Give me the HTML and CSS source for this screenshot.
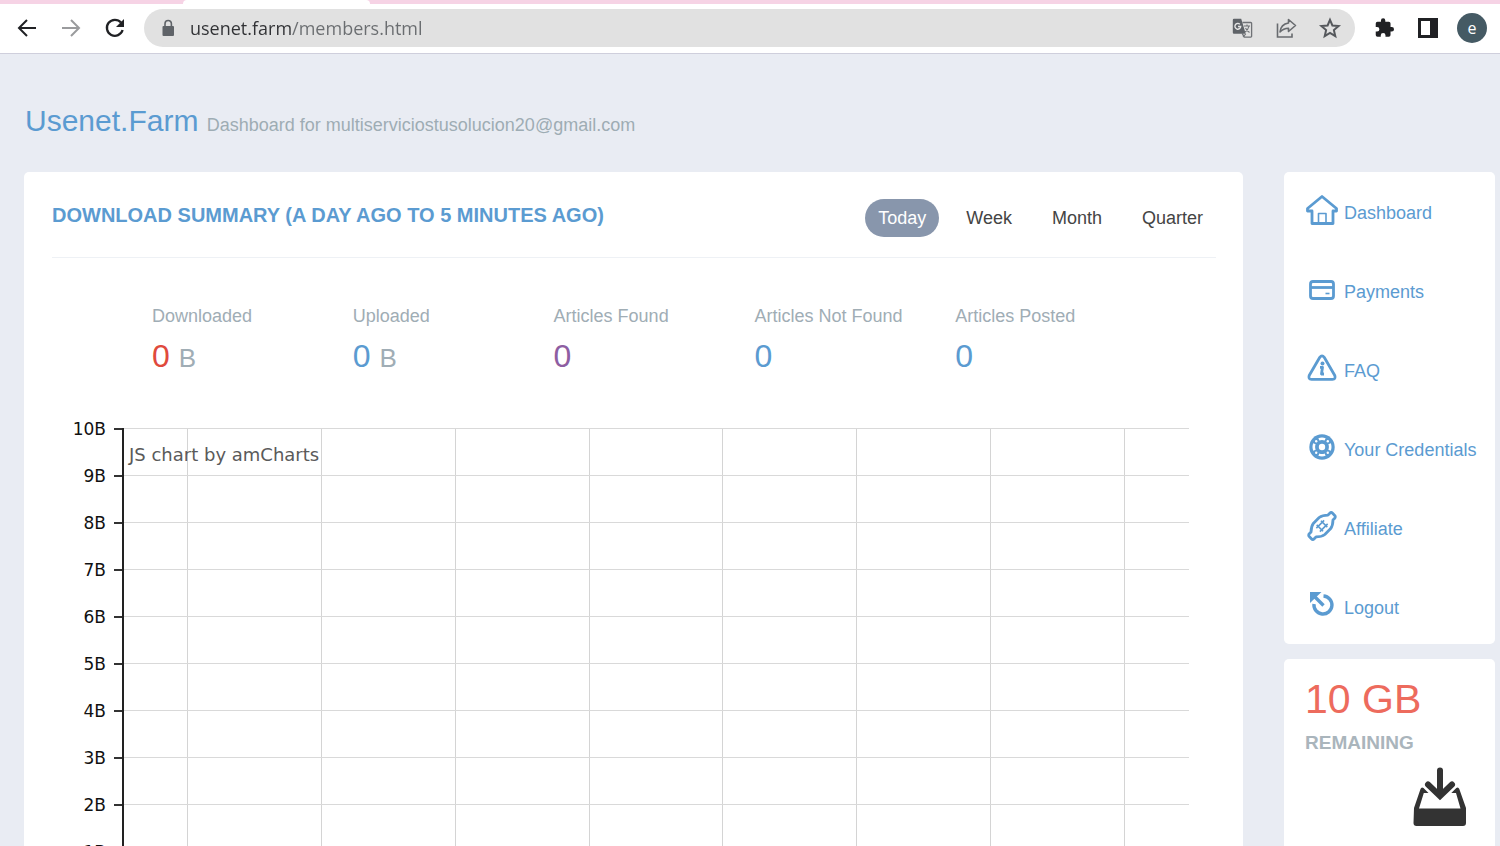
FILE: index.html
```html
<!DOCTYPE html>
<html lang="en">
<head>
<meta charset="utf-8">
<title>Usenet.Farm members</title>
<link rel="stylesheet" href="styles.css">
</head>
<body>
<div class="browser">
  <div class="tab-strip"><div class="tab-active"></div></div>
  <div class="toolbar">
    <button class="tool" aria-label="Back"><svg width="20" height="20" viewBox="0 0 20 20" fill="none" stroke="#202124" stroke-width="2"><path d="M19 10H2.5M10 2L2 10l8 8"/></svg></button>
    <button class="tool" aria-label="Forward"><svg width="20" height="20" viewBox="0 0 20 20" fill="none" stroke="#9a9b9d" stroke-width="2"><path d="M1 10h16.500M10 2l8 8-8 8"/></svg></button>
    <button class="tool" aria-label="Reload"><svg width="20" height="20" viewBox="0 0 20 20" fill="none" stroke="#202124" stroke-width="2.300"><path d="M16 4.600A8 8 0 1 0 17.600 12"/><path d="M19 1v8h-8z" fill="#202124" stroke="none"/></svg></button>
    <div class="omnibox">
      <svg class="omni-icon" viewBox="0 0 24 24"><rect x="6.500" y="10" width="11.500" height="10" rx="1" fill="#5f6368"/><path d="M9 10V7.700a3.200 3.200 0 0 1 6.400 0V10" fill="none" stroke="#5f6368" stroke-width="1.600"/></svg>
      <input class="url" type="text" aria-label="Address" value="usenet.farm/members.html">
      <button class="omni-button" aria-label="Translate"><svg class="omni-icon" viewBox="0 0 24 24"><path d="M12.500 6.500h8.300a.8.8 0 0 1 .8.8v13a.8.8 0 0 1-.8.8h-6.500l-2-3.500" fill="none" stroke="#6f7276" stroke-width="1.300"/><path d="M4 2.800h7.200l4.500 15H4a1.200 1.200 0 0 1-1.200-1.200V4A1.200 1.200 0 0 1 4 2.800z" fill="#5f6368"/><path d="M9.800 8.200A2.900 2.900 0 1 0 10.700 10.500H8" fill="none" stroke="#e6e6e6" stroke-width="1.400"/><path d="M14 10h6M17 8.500V10M19 10c-.6 3-2.500 5-4 6M15.500 12c1 2 2.500 3.500 4 4.500M13 21l2.800-3.200" fill="none" stroke="#6f7276" stroke-width="1.100"/></svg></button>
      <button class="omni-button" aria-label="Share"><svg class="omni-icon" viewBox="0 0 24 24" fill="none" stroke="#686b6f" stroke-width="1.600"><path d="M3.500 7.500v13.500h14.500V17.500"/><path d="M14.500 3.500l7 6-7 6v-3.300c-3.500 0-6 1-8.500 3.800.5-5 3.500-8.200 8.500-9z" stroke-linejoin="round"/></svg></button>
      <button class="omni-button" aria-label="Bookmark"><svg class="omni-icon" viewBox="0 0 24 24"><path d="M12 3.800l2.400 5.700 6.200.5-4.700 4.100 1.400 6.100L12 17l-5.300 3.200 1.400-6.100L3.400 10l6.200-.5z" fill="none" stroke="#55585c" stroke-width="2"/></svg></button>
    </div>
    <button class="tool" aria-label="Extensions"><svg width="24" height="24" viewBox="0 0 24 24"><path d="M20.500 11H19V7a2 2 0 0 0-2-2h-4V3.500a2.500 2.500 0 0 0-5 0V5H4a2 2 0 0 0-2 2v3.800h1.500a2.700 2.700 0 0 1 0 5.400H2V20a2 2 0 0 0 2 2h3.800v-1.500a2.700 2.700 0 0 1 5.400 0V22H17a2 2 0 0 0 2-2v-4h1.500a2.500 2.500 0 0 0 0-5z" fill="#202124" transform="translate(2 1.500) scale(.87)"/></svg></button>
    <button class="tool" aria-label="Side panel"><svg width="20" height="20" viewBox="0 0 20 20"><path d="M0 0h20v20H0zM3 3v14h9V3z" fill="#202124" fill-rule="evenodd"/></svg></button>
    <button class="tool avatar" aria-label="Profile">e</button>
  </div>

  <div class="page">
    <h1 class="page-title">Usenet.Farm <small class="page-subtitle">Dashboard for multiserviciostusolucion20@gmail.com</small></h1>
    <div class="columns">
      <main class="card summary">
        <header class="summary-head">
          <h2 class="summary-title">Download summary (a day ago to 5 minutes ago)</h2>
          <div class="ranges">
            <button class="range range-active" aria-pressed="true">Today</button>
            <button class="range" aria-pressed="false">Week</button>
            <button class="range" aria-pressed="false">Month</button>
            <button class="range" aria-pressed="false">Quarter</button>
          </div>
        </header>
        <dl class="stats">
          <div><dt class="stat-label">Downloaded</dt><dd class="stat-value red">0 <small class="unit">B</small></dd></div>
          <div><dt class="stat-label">Uploaded</dt><dd class="stat-value blue">0 <small class="unit">B</small></dd></div>
          <div><dt class="stat-label">Articles Found</dt><dd class="stat-value purple">0</dd></div>
          <div><dt class="stat-label">Articles Not Found</dt><dd class="stat-value blue">0</dd></div>
          <div><dt class="stat-label">Articles Posted</dt><dd class="stat-value blue">0</dd></div>
        </dl>
        <div class="chart">
          <ul class="axis">
            <li>10B</li><li>9B</li><li>8B</li><li>7B</li><li>6B</li><li>5B</li><li>4B</li><li>3B</li><li>2B</li><li>1B</li>
          </ul>
          <div class="plot">
            <div class="grid-cols"><i></i><i></i><i></i><i></i><i></i><i></i><i></i><i></i></div>
            <div class="grid-rows"><i></i><i></i><i></i><i></i><i></i><i></i><i></i><i></i><i></i><i></i></div>
            <a class="credit" href="#">JS chart by amCharts</a>
          </div>
        </div>
      </main>

      <aside class="side">
        <nav class="card menu">
          <a class="menu-link" href="#"><svg class="menu-icon" viewBox="0 0 32 32"><path d="M16 1.500L1.500 13.500v2.500H6V28.500h21V16h3.500v-2.500z" class="line"/><path d="M12.500 28V18.500h7.500V28" class="thin"/></svg>Dashboard</a>
          <a class="menu-link" href="#"><svg class="menu-icon" viewBox="0 0 32 32"><rect x="4.500" y="7.500" width="23" height="17" rx="2.500" class="line"/><path d="M5 13.500h22" class="line"/><path d="M19.500 19.500h4" class="thin"/></svg>Payments</a>
          <a class="menu-link" href="#"><svg class="menu-icon" viewBox="0 0 32 32"><path d="M13.800 4.300Q16 1.300 18.200 4.300L28.800 22.500Q30 26.300 26.500 26.300H5.500Q2 26.300 3.200 22.500z" class="line"/><circle cx="16.500" cy="10.500" r="2" class="solid"/><path d="M14 14.300h2.500l-1 6.700h2.500" class="line"/></svg>FAQ</a>
          <a class="menu-link" href="#"><svg class="menu-icon" viewBox="0 0 32 32"><circle cx="16" cy="15" r="12.700" class="solid"/><circle cx="16" cy="15" r="8.200" class="cut" pathLength="8" stroke-dasharray="1 1" stroke-dashoffset=".5"/><g fill="#fff"><circle cx="16" cy="15" r="3.200"/><circle cx="10.200" cy="9.200" r="1.200"/><circle cx="21.800" cy="9.200" r="1.200"/><circle cx="10.200" cy="20.800" r="1.200"/><circle cx="21.800" cy="20.800" r="1.200"/></g></svg>Your Credentials</a>
          <a class="menu-link" href="#"><svg class="menu-icon" viewBox="0 0 32 32"><g transform="translate(16 15) rotate(-45)"><path d="M-12-3.500Q-8-7.500-4-8H4Q8-7.500 12-3.500H14.500a2 2 0 0 1 2 2v3a2 2 0 0 1-2 2H12Q8 7.500 4 8H-4Q-8 7.500-12 3.500H-14.500a2 2 0 0 1-2-2v-3a2 2 0 0 1 2-2z" class="line"/><path d="M-5.500-2.500H5.500M-5.500 2.500H5.500M-3-4.500v9M3-4.500v9" class="thin"/></g></svg>Affiliate</a>
          <a class="menu-link" href="#"><svg class="menu-icon" viewBox="0 0 32 32"><path d="M8 14a9 9 0 1 0 9.500-8" class="bold"/><path d="M17.500 15.500L8 6" class="bold"/><path d="M4 2h11.500L4 13z" class="solid"/></svg>Logout</a>
        </nav>
        <section class="card quota">
          <p class="quota-value">10 GB</p>
          <p class="quota-label">Remaining</p>
          <svg class="quota-icon" width="54" height="60" viewBox="0 0 54 60"><path d="M1 41l6.500-19q1-2.500 3-1l5 5h-4.700L6 41.500h41.500L43 26h-4.700l5-5q2-1.500 3 1L53 41v15a3 3 0 0 1-3 3H3.500A3 3 0 0 1 .500 56z" fill="#333"/><path d="M27 3.500V28M15 17.500l12 11.500 12-11.500" fill="none" stroke="#333" stroke-width="6" stroke-linecap="round"/></svg>
        </section>
      </aside>
    </div>
  </div>
</div>
</body>
</html>
```
FILE: styles.css
```css
* { box-sizing: border-box; }
body { margin: 0; font: 18px "Liberation Sans", Arial, sans-serif; background: #e9ecf3; }
h1, h2, p, dl, dd, ul { margin: 0; padding: 0; font-weight: 400; }
button { border: 0; padding: 0; background: none; font: inherit; color: inherit; }
a { text-decoration: none; }
.browser { height: 100vh; display: flex; flex-direction: column; overflow: hidden; }

.tab-strip { flex: none; height: 4px; background: #f6d3e5; padding-left: 183px; }
.tab-active { width: 187px; height: 4px; background: #fff; border-radius: 4px 4px 0 0; }
.toolbar { flex: none; height: 50px; display: flex; align-items: center; gap: 14px; padding: 0 13px 2px 12px; background: #fff; border-bottom: 1px solid #cfcfdc; }
.tool { width: 30px; height: 30px; display: flex; align-items: center; justify-content: center; }
.omnibox { flex: 1; height: 38px; display: flex; align-items: center; gap: 20px; padding: 0 13px 0 12px; border-radius: 19px; background: #e1e1e1; }
.omni-icon { display: block; flex: none; width: 24px; height: 24px; }
.url { flex: 1; min-width: 0; height: 30px; margin-left: -10px; padding: 0; border: 0; font: 18px "Open Sans", "Noto Sans", sans-serif; color: transparent; background: linear-gradient(90deg, #303134 102px, #6a6d70 102px); background-clip: text; -webkit-background-clip: text; }
.avatar { border-radius: 50%; background: #455a64; color: #fff; font: 16px "Open Sans", sans-serif; }

.page { padding: 49px 5px 0 24px; }
.page-title { padding-left: 1px; font-size: 30px; line-height: 36px; color: #5b9bd1; }
.page-subtitle { font-size: 18px; color: #9eacb4; }
.columns { display: grid; grid-template-columns: minmax(0, 1fr) 211px; gap: 41px; align-items: start; margin-top: 29px; }
.card { background: #fff; border-radius: 5px; }

.summary { padding: 27px 27px 27px 28px; }
.summary-head { display: flex; justify-content: space-between; align-items: flex-start; padding-bottom: 20px; border-bottom: 1px solid #eef1f5; }
.summary-title { font-size: 20px; line-height: 32px; font-weight: 700; color: #5b9bd1; text-transform: uppercase; }
.ranges { display: flex; gap: 14px; }
.range { height: 38px; padding: 0 13px; border-radius: 19px; color: #444; }
.range-active { background: #8896ac; color: #fff; }

.stats { display: grid; grid-template-columns: repeat(5, 1fr); padding: 46px 60px 0 100px; }
.stat-label { line-height: 24px; color: #a0adb5; }
.stat-value { font-size: 32px; line-height: 40px; margin-top: 8px; }
.unit { font-size: 26px; color: #a0adb5; }
.red { color: #e04a3c; }
.blue { color: #5b9bd1; }
.purple { color: #8e5ea2; }

.chart { display: flex; margin-top: 27px; padding-right: 27px; font: 17px "DejaVu Sans", sans-serif; }
.axis { width: 70px; list-style: none; color: #111; }
.axis li { display: flex; align-items: center; justify-content: flex-end; gap: 8px; height: 47px; }
.axis li::after { content: ""; width: 8px; height: 2px; background: #333; }
.plot { flex: 1; display: grid; margin-top: 23px; border-left: 2px solid #222; }
.grid-cols, .grid-rows, .credit { grid-area: 1 / 1; }
.grid-cols { display: grid; grid-template-columns: 64fr repeat(7, 134fr) 64fr; }
.grid-cols i { border-right: 1px solid #d4d4d4; }
.grid-rows i { display: block; height: 47px; border-top: 1px solid #d9d9d9; }
.credit { justify-self: start; align-self: start; padding: 16px 0 0 5px; font-size: 18px; line-height: 22px; color: #5a5a5a; }

.side { display: grid; gap: 15px; }
.menu { display: grid; gap: 42px; padding: 23px 0 17px 22px; }
.menu-link { display: flex; align-items: flex-start; gap: 6px; height: 37px; line-height: 37px; color: #5b9bd1; white-space: nowrap; }
.menu-icon { flex: none; width: 32px; height: 32px; fill: none; stroke-linejoin: round; }
.line { stroke: #5b9bd1; stroke-width: 2.800; }
.thin { stroke: #5b9bd1; stroke-width: 1.600; }
.bold { stroke: #5b9bd1; stroke-width: 3.400; }
.solid { fill: #5b9bd1; }
.cut { stroke: #fff; stroke-width: 2.600; }
.quota { padding: 16px 28px 40px 21px; }
.quota-value { font-size: 41px; line-height: 48px; color: #ed6b5d; }
.quota-label { margin-top: 8px; font-size: 19px; line-height: 24px; font-weight: 700; color: #aab5bc; text-transform: uppercase; }
.quota-icon { display: block; margin: 12px 0 0 auto; }
```
